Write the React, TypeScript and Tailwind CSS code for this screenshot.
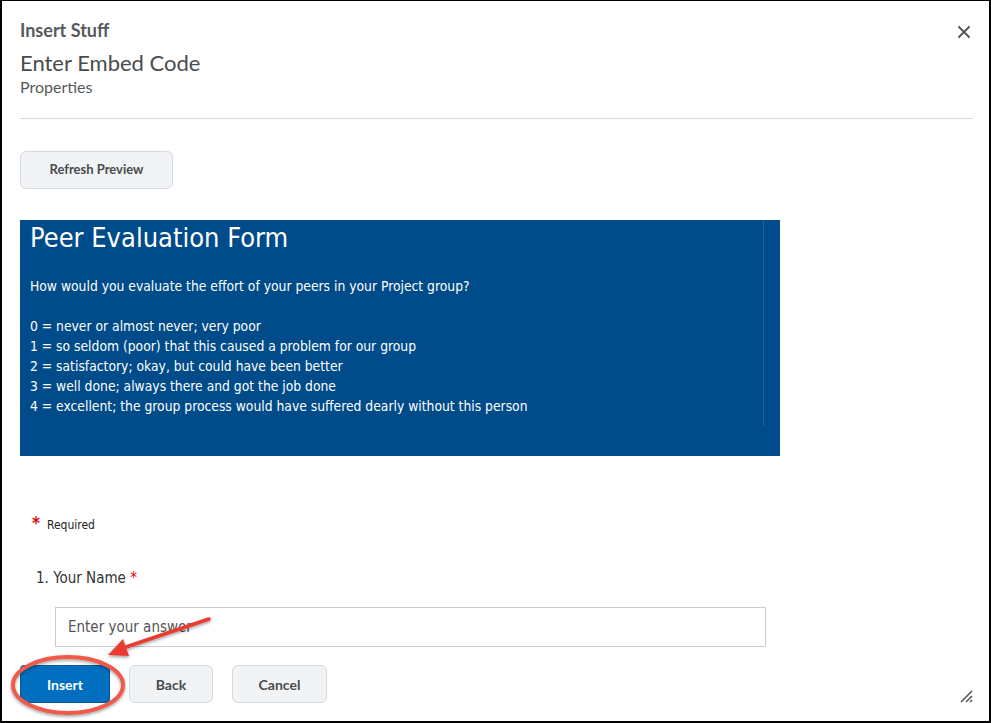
import React from "react";

export default function App() {
  const lato = { fontFamily: "Lato, 'Open Sans', sans-serif" } as React.CSSProperties;
  const tah = { fontFamily: "'DejaVu Sans Condensed', 'DejaVu Sans', sans-serif" } as React.CSSProperties;
  return (
    <div className="w-[991px] h-[723px] bg-white overflow-hidden">
      <div className="relative w-[991px] h-[723px] border-l-2 border-t border-r-2 border-b-2 border-black box-border" style={lato}>
        <div className="pl-[18px] pr-[16px] pt-[18px]">
          <div className="flex items-start justify-between">
            <div className="text-[18px] font-bold text-[#565a5c] leading-[22px]">Insert Stuff</div>
            <svg width="12" height="12" viewBox="0 0 12 12" className="mt-[7px] mr-[3px]">
              <path d="M1 1 L11 11 M11 1 L1 11" stroke="#565a5c" strokeWidth="2" strokeLinecap="round" />
            </svg>
          </div>
          <div className="mt-[9px] text-[22px] text-[#494c4e] leading-[26px]">Enter Embed Code</div>
          <div className="text-[16px] text-[#565a5c] leading-[22px]">Properties</div>
          <div className="mt-[20px] h-px bg-[#d3d9e3]" />
          <button className="mt-[32px] w-[153px] h-[38px] rounded-[6px] border border-[#d3d9e3] bg-[#f1f3f5] text-[13px] font-bold text-[#494c4e]">
            Refresh Preview
          </button>
          <div className="mt-[31px] w-[760px] h-[236px] bg-[#004b89] flex" style={tah}>
            <div className="flex-1 pl-[10px] pt-[2px] text-white">
              <div className="text-[27px] leading-[32px]">Peer Evaluation Form</div>
              <div className="mt-[22px] text-[13.75px] leading-[20px]">
                <div>How would you evaluate the effort of your peers in your Project group?</div>
                <div className="h-[20px]" />
                <div>0 = never or almost never; very poor</div>
                <div>1 = so seldom (poor) that this caused a problem for our group</div>
                <div>2 = satisfactory; okay, but could have been better</div>
                <div>3 = well done; always there and got the job done</div>
                <div>4 = excellent; the group process would have suffered dearly without this person</div>
              </div>
            </div>
            <div className="w-px h-[206px] bg-[#23639a] mr-[16px]" />
          </div>
          <div className="mt-[59px] flex items-start pl-[12px] text-[#222]" style={tah}>
            <span className="text-red-600 font-bold text-[17px] leading-[17px]">*</span>
            <span className="ml-[7px] mt-[3px] text-[12px] leading-[14px]">Required</span>
          </div>
          <div className="mt-[37px] pl-[16px] text-[15px] leading-[18px] text-[#333]" style={tah}>
            1. Your Name <span className="text-red-600">*</span>
          </div>
          <div className="mt-[20px] ml-[35px] w-[711px] h-[40px] border border-[#cccccc] flex items-center pl-[12px] text-[15px] text-[#555]" style={tah}>
            Enter your answer
          </div>
          <div className="mt-[18px] flex gap-[19px]">
            <button className="w-[90px] h-[38px] rounded-[4px] bg-[#006fbf] border border-[#005a9e] text-white text-[14px] font-bold">Insert</button>
            <button className="w-[84px] h-[38px] rounded-[6px] bg-[#f1f3f5] border border-[#d3d9e3] text-[#494c4e] text-[14px] font-bold">Back</button>
            <button className="w-[95px] h-[38px] rounded-[6px] bg-[#f1f3f5] border border-[#d3d9e3] text-[#494c4e] text-[14px] font-bold">Cancel</button>
          </div>
        </div>
        <svg className="absolute right-[16px] bottom-[18px]" width="14" height="14" viewBox="0 0 14 14">
          <path d="M2 13 L13 2 M7 13 L13 7 M11 13 L13 11" stroke="#565a5c" strokeWidth="1.6" />
        </svg>
        <svg className="absolute left-0 top-0 pointer-events-none" width="991" height="723" viewBox="0 0 991 723">
          <defs>
            <filter id="sh" x="-20%" y="-20%" width="140%" height="140%">
              <feDropShadow dx="0" dy="1.5" stdDeviation="1.5" floodColor="#000" floodOpacity="0.4" />
            </filter>
          </defs>
          <g filter="url(#sh)">
            <ellipse cx="66" cy="684" rx="55" ry="28" fill="none" stroke="#f05a4c" strokeWidth="4" />
            <line x1="207" y1="618" x2="124" y2="646" stroke="#ea3b33" strokeWidth="3.5" strokeLinecap="round" />
            <polygon points="106,654 121,638 127,655" fill="#ea3b33" />
          </g>
        </svg>
      </div>
    </div>
  );
}
